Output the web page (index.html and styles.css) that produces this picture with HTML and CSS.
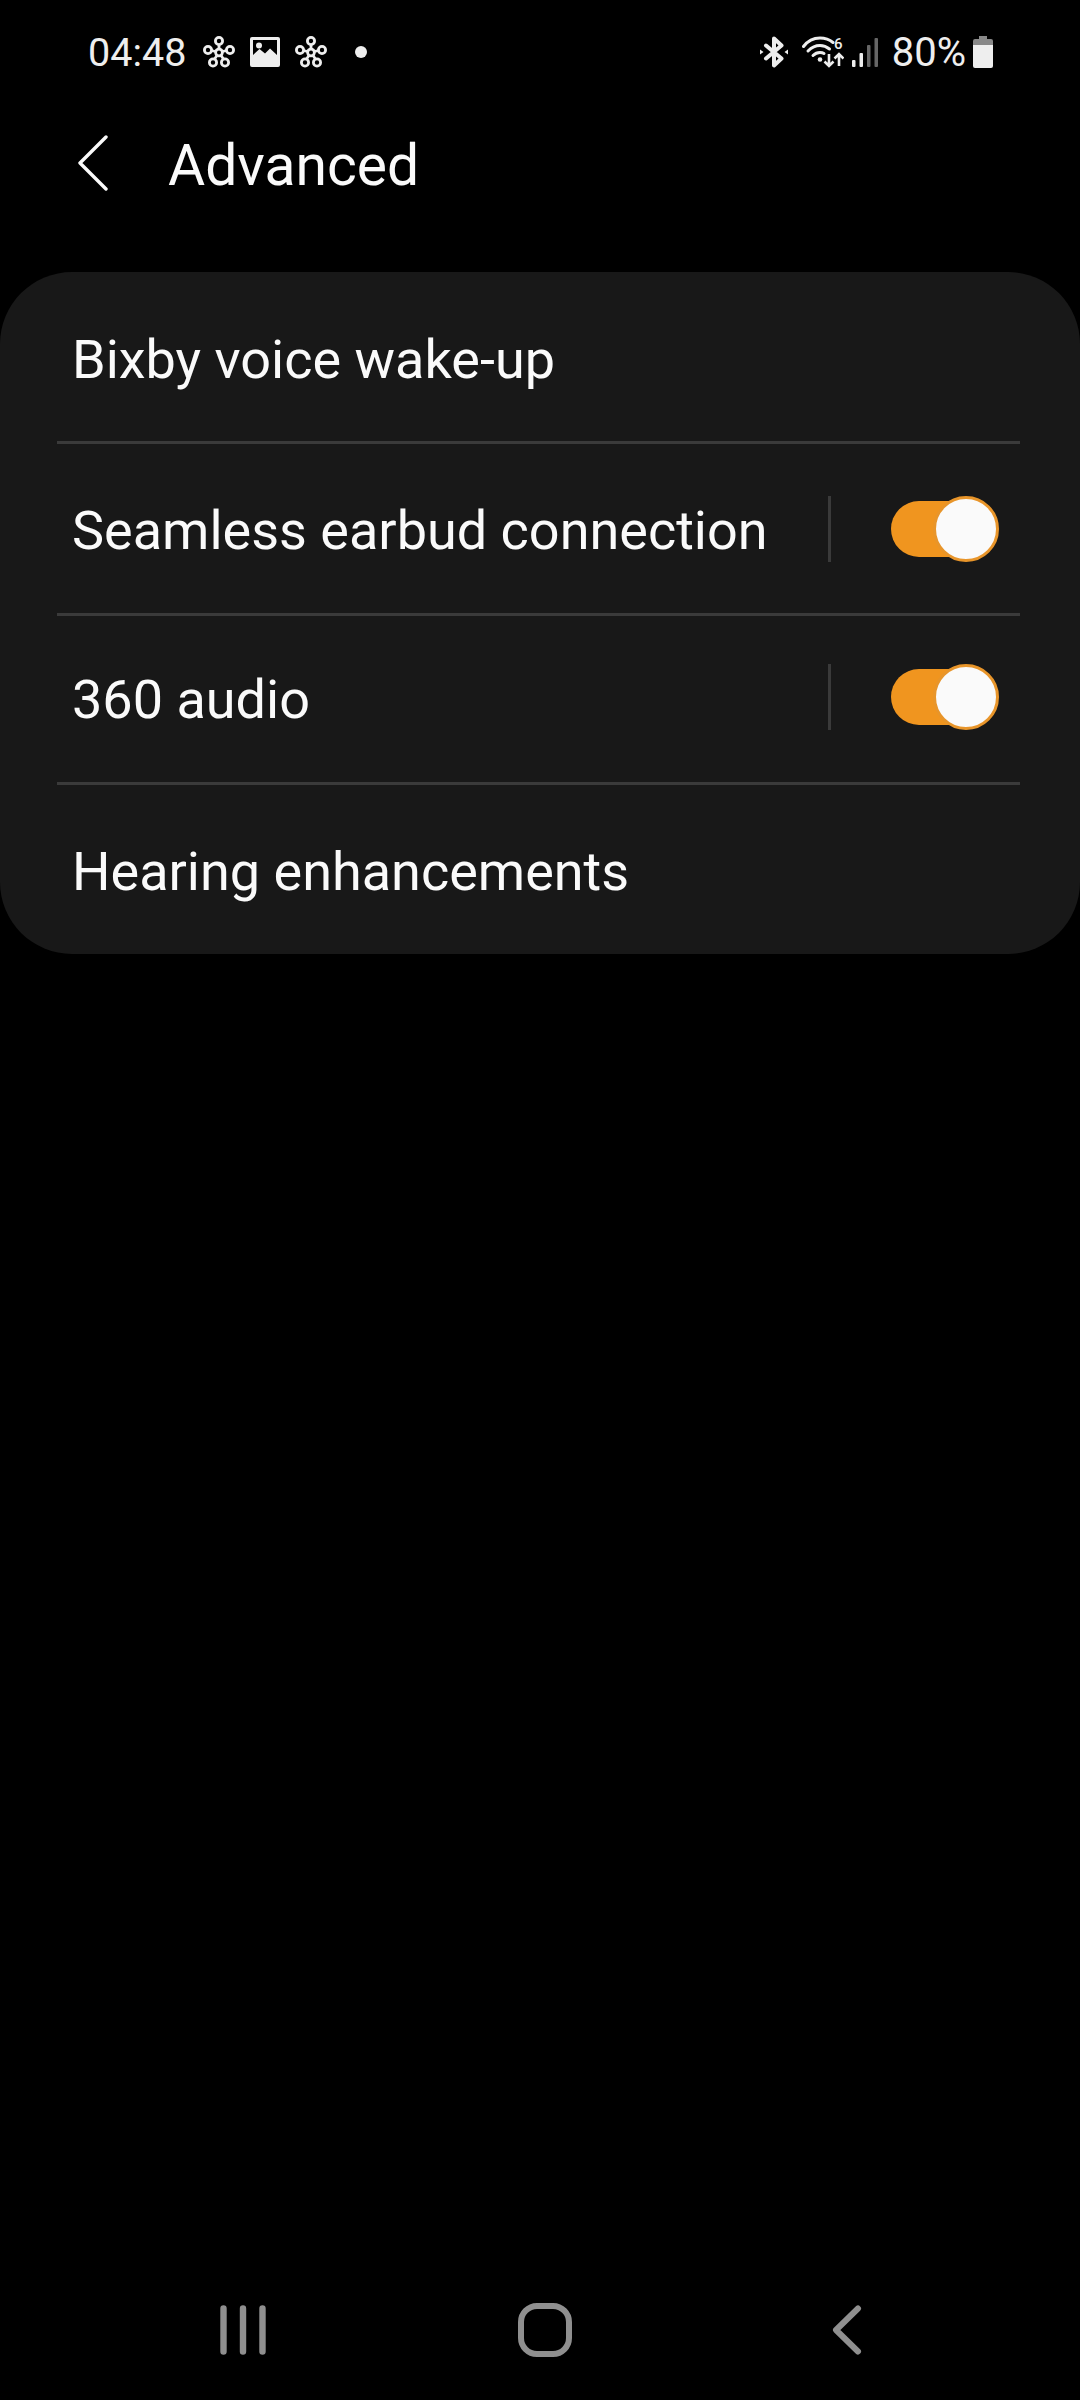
FILE: index.html
```html
<!DOCTYPE html>
<html lang="en">
<head>
  <meta charset="UTF-8">
  <meta name="viewport" content="width=device-width, initial-scale=1.0">
  <title>Advanced</title>
  <link rel="stylesheet" href="styles.css">
</head>
<body>
  <svg class="defs" width="0" height="0">
    <symbol id="flower" viewBox="0 0 32 32">
      <g fill="none" stroke="currentColor" stroke-width="2.800">
        <circle cx="16" cy="5" r="3.600"/>
        <circle cx="5" cy="14" r="3.600"/>
        <circle cx="27" cy="14" r="3.600"/>
        <circle cx="10" cy="26.500" r="3.600"/>
        <circle cx="22" cy="26.500" r="3.600"/>
        <circle cx="16" cy="16.500" r="3.400"/>
        <path d="M16 9v4M8.500 14.500l4 1M23.500 14.500l-4 1M11.500 23l2.500-3.500M20.500 23l-2.500-3.500"/>
      </g>
    </symbol>
  </svg>

  <div class="page">
    <div class="status">
      <div class="status-left">
        <span class="time">04:48</span>
        <svg class="icon-flower" width="32" height="32"><use href="#flower"/></svg>
        <svg class="icon-image" width="30" height="30" viewBox="0 0 30 30">
          <path fill="#eee" fill-rule="evenodd" d="M2 0h26a2 2 0 0 1 2 2v26a2 2 0 0 1-2 2H2a2 2 0 0 1-2-2V2a2 2 0 0 1 2-2zM3 3v15l6.500-6 5.500 4.500 5-5 7 6.500V3z"/>
          <circle cx="9" cy="8.500" r="3" fill="#eee"/>
        </svg>
        <svg class="icon-flower" width="32" height="32"><use href="#flower"/></svg>
        <span class="dot"></span>
      </div>
      <div class="status-right">
        <svg class="icon-bt" width="28" height="32" viewBox="0 0 28 32">
          <path fill="none" stroke="#eee" stroke-width="4" stroke-linejoin="round" stroke-linecap="round" d="M6 9.500l15.500 13L14 29.500V2.500l7.500 7L6 22.500"/>
          <path fill="#eee" d="M0 13.500l3.500 2.500L0 18.500zM28 13.500l-3.500 2.500 3.500 2.500z"/>
        </svg>
        <svg class="icon-wifi" width="42" height="32" viewBox="0 0 42 32">
          <g fill="none" stroke="#eee" stroke-width="3" stroke-linecap="round">
            <path d="M1.500 10.500C6 4.500 12 2 18 2s10 2 13 4.500"/>
            <path d="M6 15c3.500-3.500 8-5.500 12-5.500s7 1.500 9.500 3.500"/>
            <path d="M11 19.500c2-2 4.500-3 7-3 1.500 0 3 .4 4 1"/>
          </g>
          <circle cx="18" cy="23.500" r="2.300" fill="#eee"/>
          <text class="wifi-six" x="32" y="13">6</text>
          <path fill="none" stroke="#eee" stroke-width="2.600" d="M27 18v12M22.500 25.500L27 30l4.500-4.500M37 30V18M32.500 22.500L37 18l4.500 4.500"/>
        </svg>
        <svg class="icon-signal" width="28" height="32" viewBox="0 0 28 32">
          <rect x="1" y="24" width="3.500" height="7" rx="1" fill="#eee"/>
          <rect x="8.500" y="17" width="3.500" height="14" rx="1" fill="#eee"/>
          <rect x="16" y="9" width="3.500" height="22" rx="1" fill="#666"/>
          <rect x="23.500" y="2" width="3.500" height="29" rx="1" fill="#666"/>
        </svg>
        <span class="battery-text">80%</span>
        <svg class="icon-battery" width="20" height="32" viewBox="0 0 20 32">
          <path fill="#888" d="M6 0h8v3h4a2 2 0 0 1 2 2v4H0V5a2 2 0 0 1 2-2h4z"/>
          <path fill="#eee" d="M0 9h20v21a2 2 0 0 1-2 2H2a2 2 0 0 1-2-2z"/>
        </svg>
      </div>
    </div>

    <div class="header">
      <svg class="back" width="32" height="56" viewBox="0 0 32 56">
        <path fill="none" stroke="#fafafa" stroke-width="3.400" stroke-linecap="round" stroke-linejoin="round" d="M29 2L3 28l26 26"/>
      </svg>
      <span class="title">Advanced</span>
    </div>

    <div class="card">
      <div class="row row-first">
        <span class="row-label">Bixby voice wake-up</span>
      </div>
      <div class="row">
        <span class="row-label">Seamless earbud connection</span>
        <span class="vline"></span>
        <span class="switch"><span class="thumb"></span></span>
      </div>
      <div class="row row-short">
        <span class="row-label">360 audio</span>
        <span class="vline"></span>
        <span class="switch"><span class="thumb"></span></span>
      </div>
      <div class="row row-last">
        <span class="row-label">Hearing enhancements</span>
      </div>
    </div>

    <div class="nav">
      <svg width="46" height="50" viewBox="0 0 46 50">
        <path fill="none" stroke="#8f8f8f" stroke-width="6.400" stroke-linecap="round" d="M3.500 3.500v43M23 3.500v43M42.500 3.500v43"/>
      </svg>
      <svg width="54" height="54" viewBox="0 0 54 54">
        <rect x="3" y="3" width="48" height="48" rx="16" fill="none" stroke="#8f8f8f" stroke-width="6"/>
      </svg>
      <svg width="30" height="50" viewBox="0 0 30 50">
        <path fill="none" stroke="#8f8f8f" stroke-width="6" stroke-linecap="round" stroke-linejoin="round" d="M26 3.500L4 25l22 21.500"/>
      </svg>
    </div>
  </div>
</body>
</html>
```

FILE: styles.css
```css
* {
  box-sizing: border-box;
}
body {
  margin: 0;
  background: #000;
  font-family: Roboto, "Liberation Sans", sans-serif;
  color: #fafafa;
}
.defs {
  display: block;
  height: 0;
}
.page {
  width: 1080px;
  height: 2400px;
  display: flex;
  flex-direction: column;
  overflow: hidden;
}
.status {
  height: 84px;
  padding: 20px 87px 0 88px;
  display: flex;
  justify-content: space-between;
  align-items: center;
  color: #eee;
}
.status-left, .status-right {
  display: flex;
  align-items: center;
}
.time {
  font-size: 39.5px;
  margin-right: 17px;
}
.icon-flower {
  color: #eee;
}
.icon-image {
  margin: 0 15px;
}
.dot {
  width: 12px;
  height: 12px;
  border-radius: 50%;
  background: #eee;
  margin-left: 28px;
}
.icon-wifi {
  margin-left: 14px;
}
.wifi-six {
  font-family: Roboto, sans-serif;
  font-size: 15px;
  font-weight: 500;
  fill: #eee;
}
.icon-signal {
  margin-left: 7px;
}
.battery-text {
  font-size: 40px;
  margin-left: 13px;
}
.icon-battery {
  margin-left: 7px;
}
.header {
  height: 110px;
  margin-top: 26px;
  padding-left: 77px;
  display: flex;
  align-items: center;
}
.back {
  margin-bottom: 4px;
}
.title {
  font-size: 57px;
  margin-left: 59px;
}
.card {
  margin-top: 52px;
  background: #181818;
  border-radius: 72px;
}
.row {
  height: 172px;
  margin: 0 60px 0 57px;
  padding: 0 21px 0 15px;
  display: flex;
  align-items: center;
  border-bottom: 3px solid #3a3a3a;
}
.row-short {
  height: 169px;
  padding-bottom: 4px;
}
.row-last {
  height: 169px;
  border-bottom: 0;
}
.row-label {
  font-size: 54px;
  flex: 1;
  margin-top: 4px;
}
.row-first .row-label {
  margin-top: 6px;
}
.vline {
  width: 3px;
  height: 66px;
  background: #3a3a3a;
  margin-right: 60px;
}
.switch {
  position: relative;
  width: 99px;
  height: 56px;
  border-radius: 28px;
  background: #f0951f;
  flex: none;
  margin-right: 9px;
}
.thumb {
  position: absolute;
  top: -5px;
  right: -9px;
  width: 66px;
  height: 66px;
  border-radius: 50%;
  background: #fafafa;
  border: 3px solid #e8952a;
}
.nav {
  margin-top: auto;
  margin-bottom: 43px;
  padding-left: 92px;
  display: grid;
  grid-template-columns: 302px 302px 302px;
  justify-items: center;
  align-items: center;
}
```
